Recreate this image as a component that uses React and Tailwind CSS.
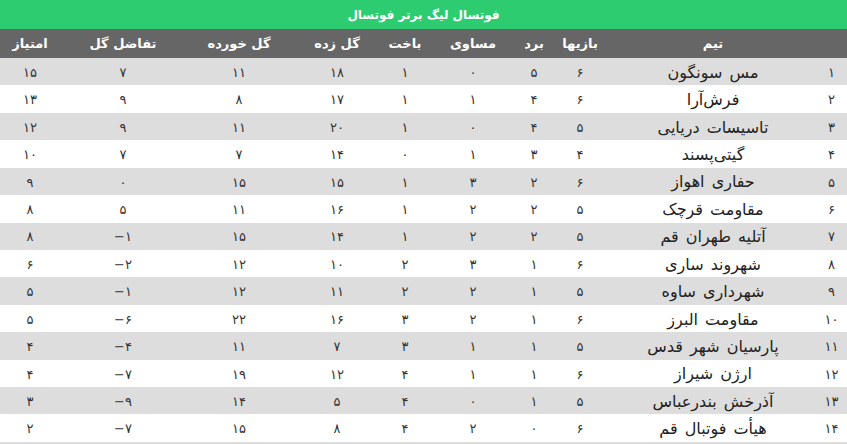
const rows = [
  ["۱", "مس سونگون", "۶", "۵", "۰", "۱", "۱۸", "۱۱", "۷", "۱۵"],
  ["۲", "فرش‌آرا", "۶", "۴", "۱", "۱", "۱۷", "۸", "۹", "۱۳"],
  ["۳", "تاسیسات دریایی", "۵", "۴", "۰", "۱", "۲۰", "۱۱", "۹", "۱۲"],
  ["۴", "گیتی‌پسند", "۴", "۳", "۱", "۰", "۱۴", "۷", "۷", "۱۰"],
  ["۵", "حفاری اهواز", "۶", "۲", "۳", "۱", "۱۵", "۱۵", "۰", "۹"],
  ["۶", "مقاومت قرچک", "۵", "۲", "۲", "۱", "۱۶", "۱۱", "۵", "۸"],
  ["۷", "آتلیه طهران قم", "۵", "۲", "۲", "۱", "۱۴", "۱۵", "−۱", "۸"],
  ["۸", "شهروند ساری", "۶", "۱", "۳", "۲", "۱۰", "۱۲", "−۲", "۶"],
  ["۹", "شهرداری ساوه", "۵", "۱", "۲", "۲", "۱۱", "۱۲", "−۱", "۵"],
  ["۱۰", "مقاومت البرز", "۶", "۱", "۲", "۳", "۱۶", "۲۲", "−۶", "۵"],
  ["۱۱", "پارسیان شهر قدس", "۵", "۱", "۱", "۳", "۷", "۱۱", "−۴", "۴"],
  ["۱۲", "ارژن شیراز", "۶", "۱", "۱", "۴", "۱۲", "۱۹", "−۷", "۴"],
  ["۱۳", "آذرخش بندرعباس", "۵", "۱", "۰", "۴", "۵", "۱۴", "−۹", "۳"],
  ["۱۴", "هیأت فوتبال قم", "۶", "۰", "۲", "۴", "۸", "۱۵", "−۷", "۲"],
];

const headers = ["", "تیم", "بازیها", "برد", "مساوی", "باخت", "گل زده", "گل خورده", "تفاضل گل", "امتیاز"];

const cols = "grid grid-cols-[31px_206px_60px_32px_90px_46px_90px_106px_126px_60px]";

export default function App() {
  return (
    <div dir="rtl" className="w-[847px] h-[444px] overflow-hidden bg-white font-['DejaVu_Sans',sans-serif]">
      {/* title */}
      <div className="h-[29px] bg-[#2ecc71] flex items-center justify-center text-white text-[12px] font-bold">
        فوتسال لیگ برتر فوتسال
      </div>

      {/* header */}
      <div className={`${cols} h-[29px] bg-[#666666] text-white text-[13px] font-bold items-center`}>
        {headers.map((h, i) => (
          <div key={i} className="text-center">{h}</div>
        ))}
      </div>

      {/* rows */}
      {rows.map((r, i) => (
        <div
          key={i}
          className={`${cols} h-[27.43px] items-center ${i % 2 === 0 ? "bg-[#dddddd]" : "bg-white"}`}
        >
          {r.map((c, j) =>
            j === 1 ? (
              <div key={j} className="text-center text-[16px] text-[#222222] pt-[2px] [word-spacing:2px]">{c}</div>
            ) : (
              <div key={j} className="text-center text-[13px] text-[#333333] pt-[2px]">
                <bdo dir="ltr">{c}</bdo>
              </div>
            )
          )}
        </div>
      ))}
      <div className="h-[10px] bg-[#dddddd]" />
    </div>
  );
}
